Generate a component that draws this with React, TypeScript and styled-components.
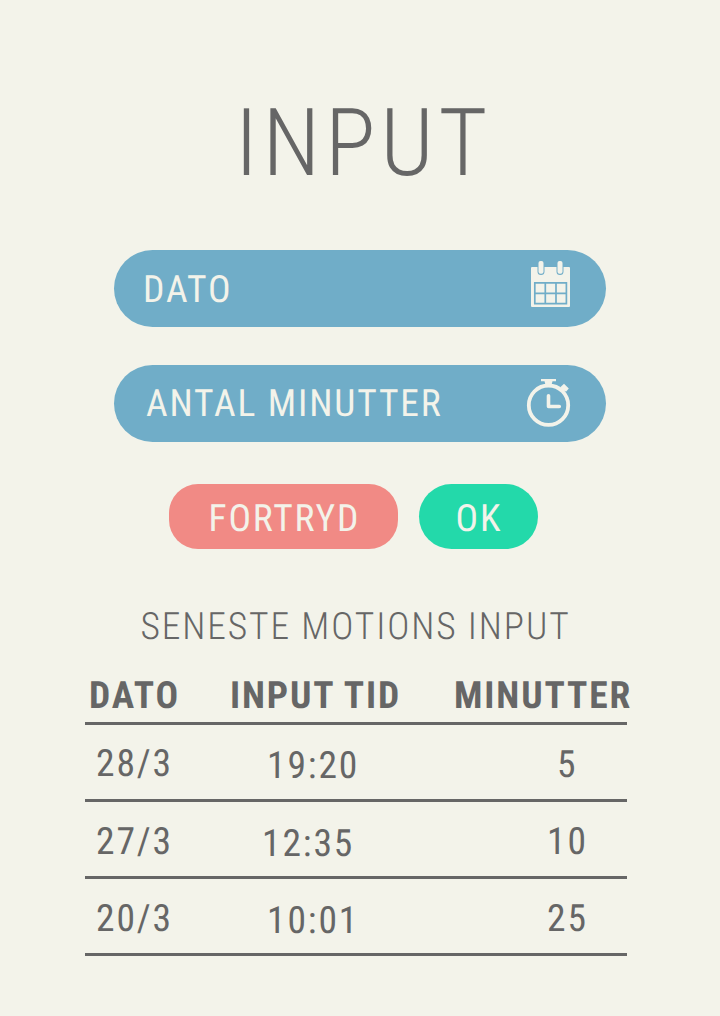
import React from "react";
import styled, { createGlobalStyle } from "styled-components";

const ink = "#666666";
const paper = "#f3f3ea";
const blue = "#70adc8";

const GlobalStyle = createGlobalStyle`
  * { box-sizing: border-box; }
  body { margin: 0; background: ${paper}; }
`;

const Screen = styled.main`
  display: flex;
  flex-direction: column;
  width: 720px;
  height: 1016px;
  overflow: hidden;
  background: ${paper};
  color: ${ink};
  font-family: "Roboto Condensed", Roboto, sans-serif;
  font-stretch: 75%;
  font-size: 37.5px;
  line-height: 44px;
  letter-spacing: 0.05em;
  white-space: nowrap;
  text-rendering: geometricPrecision;
`;

const Title = styled.h1`
  margin: 0;
  padding: 88px 0 0 235px;
  height: 250px;
  font-size: 93.75px;
  font-weight: 300;
  line-height: 110px;
  letter-spacing: 0.05em;
`;

const Fields = styled.div`
  display: flex;
  flex-direction: column;
  gap: 38px;
  padding: 0 114px;
`;

const Field = styled.button<{ $left: number; $top: number }>`
  display: flex;
  align-items: flex-start;
  justify-content: space-between;
  height: 77px;
  padding: ${(p) => p.$top}px 28px 0 ${(p) => p.$left}px;
  border: 0;
  border-radius: 39px;
  background: ${blue};
  color: ${paper};
  font: inherit;
  letter-spacing: inherit;
  text-rendering: inherit;
`;

const FieldIcon = styled.svg<{ $lift: number }>`
  width: 56px;
  height: 60px;
  margin: -${(p) => p.$lift}px 0 0;
  flex: none;
`;

const Actions = styled.div`
  display: flex;
  gap: 21px;
  padding: 42px 0 0 169px;
`;

const Action = styled.button<{ $width: number; $left: number; $color: string; $radius: number }>`
  width: ${(p) => p.$width}px;
  height: 65px;
  padding: 13px 0 0 ${(p) => p.$left}px;
  display: flex;
  align-items: flex-start;
  border: 0;
  border-radius: ${(p) => p.$radius}px;
  background: ${(p) => p.$color};
  color: ${paper};
  font: inherit;
  letter-spacing: inherit;
  text-rendering: inherit;
`;

const Subtitle = styled.h2`
  margin: 56px 0 0;
  padding-left: 140.5px;
  font-size: 37.5px;
  font-weight: 300;
`;

const Table = styled.div`
  margin: 25px 0 0 85px;
  width: 542px;
`;

const Row = styled.div<{ $head?: boolean }>`
  display: grid;
  grid-template-columns: 140px 222px 180px;
  height: ${(p) => (p.$head ? 51 : 77)}px;
  border-bottom: 3px solid ${ink};
  font-weight: ${(p) => (p.$head ? 700 : 400)};
`;

const Cell = styled.span<{ $left: number; $top: number }>`
  padding: ${(p) => p.$top}px 0 0 ${(p) => p.$left}px;
`;

const entries = [
  [["28/3", 11, 17], ["19:20", 42, 19], ["5", 110, 18]],
  [["27/3", 11, 18], ["12:35", 37, 20], ["10", 100, 18]],
  [["20/3", 11, 18], ["10:01", 42, 20], ["25", 100, 18]],
] as [string, number, number][][];

const CalendarIcon = () => (
  <FieldIcon viewBox="522 255 56 60" $lift={13}>
    <rect x="531" y="267" width="39" height="40" rx="1" fill={paper} />
    <path d="M537.5 267v4.5a3.5 3.5 0 0 0 7 0v-4.5zM556.5 267v4.5a3.5 3.5 0 0 0 7 0v-4.5z" fill={blue} />
    <rect x="538.5" y="261" width="5" height="12.7" rx="2" fill={paper} />
    <rect x="557.5" y="261" width="5" height="12.7" rx="2" fill={paper} />
    <path d="M534.8 282.8h31.6v20.8h-31.6zM545.3 282.8v20.8M556 282.8v20.8M534.8 293.3h31.6" fill="none" stroke={blue} strokeWidth="1.7" />
  </FieldIcon>
);

const StopwatchIcon = () => (
  <FieldIcon viewBox="522 372 56 60" $lift={10}>
    <circle cx="548.5" cy="405.2" r="19.7" fill="none" stroke={paper} strokeWidth="3.8" />
    <path d="M541 379h15v2.2h-3.5l-.8 3h-6.4l-.8-3H541zM560.3 387.3l3.7-3.5 4.8 4.6-2.8 3.4-1.3-1-1.7 1.5-3-2.8 1.3-1.4z" fill={paper} />
    <path d="M548.5 395.8v10.7h10.8" fill="none" stroke={paper} strokeWidth="3.6" strokeLinecap="round" strokeLinejoin="round" />
  </FieldIcon>
);

export default function App() {
  return (
    <Screen>
      <GlobalStyle />
      <Title>INPUT</Title>
      <Fields>
        <Field $left={29} $top={18}>DATO<CalendarIcon /></Field>
        <Field $left={32} $top={17}>ANTAL MINUTTER<StopwatchIcon /></Field>
      </Fields>
      <Actions>
        <Action $width={229} $left={39.5} $radius={29} $color="#f18a85">FORTRYD</Action>
        <Action $width={119} $left={36.5} $radius={33} $color="#23d9aa">OK</Action>
      </Actions>
      <Subtitle>SENESTE MOTIONS INPUT</Subtitle>
      <Table>
        <Row $head>
          <Cell $left={4} $top={0}>DATO</Cell>
          <Cell $left={5} $top={0}>INPUT TID</Cell>
          <Cell $left={7} $top={0}>MINUTTER</Cell>
        </Row>
        {entries.map((cells) => (
          <Row key={cells[0][0]}>
            {cells.map(([text, left, top]) => (
              <Cell key={text} $left={left} $top={top}>{text}</Cell>
            ))}
          </Row>
        ))}
      </Table>
    </Screen>
  );
}
